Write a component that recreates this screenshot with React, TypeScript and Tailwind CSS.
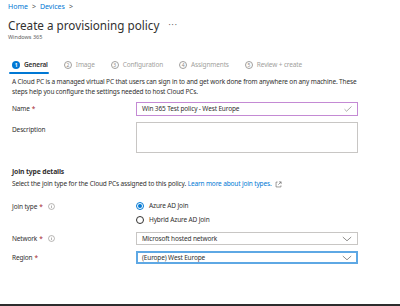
import React from "react";

const Step = ({ n, label, active }: { n: number; label: string; active?: boolean }) => (
  <div className="relative flex items-center gap-[4px] h-[16px]">
    {active ? (
      <span className="w-[8px] h-[8px] rounded-full bg-[#0078d4] text-white text-[5px] font-bold flex items-center justify-center leading-none">{n}</span>
    ) : (
      <span className="w-[8px] h-[8px] rounded-full border border-[#a19f9d] text-[#8a8886] text-[5px] flex items-center justify-center leading-none">{n}</span>
    )}
    <span className={active ? "text-[#323130] font-semibold" : "text-[#a19f9d]"}>{label}</span>
    {active && <span className="absolute left-[-3px] right-[-1px] bottom-[-1px] h-[2px] bg-[#0078d4] rounded-sm" />}
  </div>
);

const Info = () => (
  <svg width="7" height="7" viewBox="0 0 8 8" className="ml-[5px]">
    <circle cx="4" cy="4" r="3.4" fill="none" stroke="#8a8886" strokeWidth="0.7" />
    <rect x="3.65" y="3.4" width="0.7" height="2.4" fill="#8a8886" />
    <rect x="3.65" y="2.1" width="0.7" height="0.7" fill="#8a8886" />
  </svg>
);

const Chevron = () => (
  <svg width="10" height="6" viewBox="0 0 10 6">
    <path d="M0.8 1 L5 4.8 L9.2 1" fill="none" stroke="#605e5c" strokeWidth="0.7" />
  </svg>
);

const Label = ({ children, req, info }: { children: React.ReactNode; req?: boolean; info?: boolean }) => (
  <div className="w-[124px] flex items-center text-[#323130]">
    <span>{children}</span>
    {req && <span className="text-[#a4262c] ml-[2px]">*</span>}
    {info && <Info />}
  </div>
);

export default function App() {
  return (
    <div
      className="w-[400px] h-[306px] bg-white flex flex-col overflow-hidden text-[6.5px] tracking-[-0.14px] text-[#323130]"
      style={{ fontFamily: '"Noto Sans", "Open Sans", sans-serif' }}
    >
      <div className="flex-1 pl-[8px] pr-[8px]">
        <div className="mt-[2px] h-[10px] flex items-center gap-[4px] text-[7px] tracking-normal text-[#0078d4]">
          <span>Home</span>
          <span className="text-[#605e5c]">&gt;</span>
          <span>Devices</span>
          <span className="text-[#605e5c]">&gt;</span>
        </div>
        <div className="mt-[7px] h-[14px] flex items-center tracking-normal">
          <span className="text-[11.7px] leading-none text-[#323130]">Create a provisioning policy</span>
          <span className="ml-[9px] text-[#605e5c] text-[8px] tracking-[1px] -mt-[3px]">···</span>
        </div>
        <div className="h-[8px] flex items-center text-[5.5px] tracking-normal text-[#605e5c]">Windows 365</div>

        <div className="pl-[4px]">
          <div className="mt-[16px] flex items-center gap-[16px] text-[6.5px]">
            <Step n={1} label="General" active />
            <Step n={2} label="Image" />
            <Step n={3} label="Configuration" />
            <Step n={4} label="Assignments" />
            <Step n={5} label="Review + create" />
          </div>

          <div className="mt-[4px] leading-[10px] w-[350px]">
            A Cloud PC is a managed virtual PC that users can sign in to and get work done from anywhere on any machine. These
            steps help you configure the settings needed to host Cloud PCs.
          </div>

          <div className="mt-[5px] flex items-center">
            <Label req>Name</Label>
            <div className="w-[222px] h-[14px] border border-[#c48ad4] flex items-center justify-between px-[5px]">
              <span>Win 365 Test policy - West Europe</span>
              <svg width="8" height="6" viewBox="0 0 8 6">
                <path d="M0.5 3.2 L2.6 5.2 L7.5 0.5" fill="none" stroke="#8a8886" strokeWidth="0.7" />
              </svg>
            </div>
          </div>

          <div className="mt-[6px] flex items-start">
            <div className="pt-[3px]"><Label>Description</Label></div>
            <div className="w-[222px] h-[31px] border border-[#c8c6c4]" />
          </div>

          <div className="mt-[14px] h-[10px] flex items-center font-bold text-[6.8px]">Join type details</div>
          <div className="mt-[2px] h-[10px] flex items-center">
            <span>Select the join type for the Cloud PCs assigned to this policy.&nbsp;</span>
            <span className="text-[#0078d4]">Learn more about join types.</span>
            <svg width="7" height="7" viewBox="0 0 8 8" className="ml-[3px]">
              <path d="M3 1.2 H1.2 V6.8 H6.8 V5" fill="none" stroke="#605e5c" strokeWidth="0.7" />
              <path d="M4.5 1 H7 V3.5 M7 1 L3.8 4.2" fill="none" stroke="#605e5c" strokeWidth="0.7" />
            </svg>
          </div>

          <div className="mt-[12px] flex items-start">
            <div className="pt-[1px]"><Label req info>Join type</Label></div>
            <div className="flex flex-col gap-[5px]">
              <div className="flex items-center gap-[5px] h-[9px]">
                <span className="w-[8px] h-[8px] rounded-full border border-[#0078d4] flex items-center justify-center">
                  <span className="w-[4px] h-[4px] rounded-full bg-[#0078d4]" />
                </span>
                <span>Azure AD Join</span>
              </div>
              <div className="flex items-center gap-[5px] h-[9px]">
                <span className="w-[8px] h-[8px] rounded-full border border-[#323130]" />
                <span>Hybrid Azure AD Join</span>
              </div>
            </div>
          </div>

          <div className="mt-[8px] flex items-center">
            <Label req info>Network</Label>
            <div className="w-[222px] h-[13px] border border-[#c8c6c4] flex items-center justify-between px-[5px]">
              <span>Microsoft hosted network</span>
              <Chevron />
            </div>
          </div>

          <div className="mt-[6px] flex items-center">
            <Label req>Region</Label>
            <div className="w-[222px] h-[13px] border-2 border-[#5ea8e4] flex items-center justify-between px-[4px]">
              <span>(Europe) West Europe</span>
              <Chevron />
            </div>
          </div>
        </div>
      </div>
      <div className="h-[2px] bg-[#2d2d2d]" />
    </div>
  );
}
